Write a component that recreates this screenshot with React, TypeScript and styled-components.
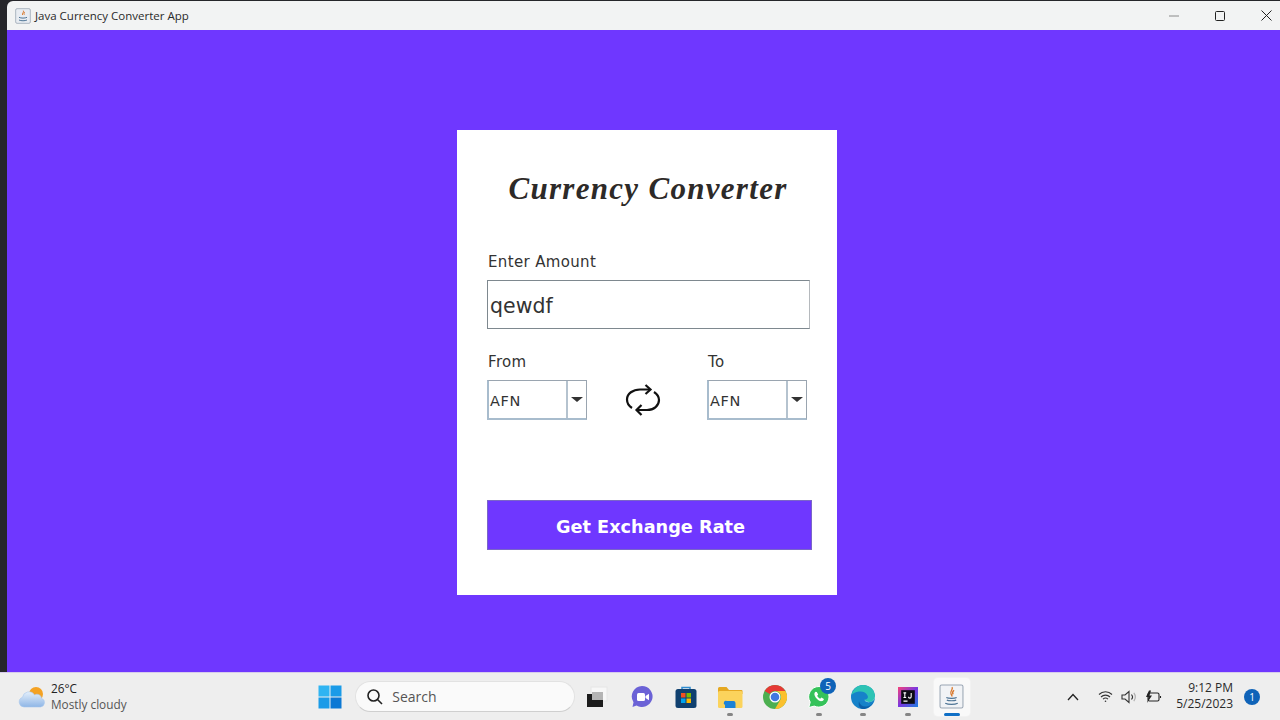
import styled, { createGlobalStyle } from "styled-components";

const GlobalStyle = createGlobalStyle`
  html, body {
    margin: 0;
    padding: 0;
    width: 1280px;
    height: 720px;
    overflow: hidden;
    background: #26262a;
  }
  * { box-sizing: border-box; }
`;

const Screen = styled.div`
  width: 1280px;
  height: 720px;
  display: flex;
  flex-direction: column;
`;

const Desktop = styled.div`
  flex: 1;
  min-height: 0;
  padding: 1px 0 0 7px;
  display: flex;
`;

const Window = styled.div`
  flex: 1;
  display: flex;
  flex-direction: column;
`;

const TitleBar = styled.div`
  height: 29px;
  background: #f2f3f3;
  border-top-left-radius: 6px;
  display: flex;
  align-items: center;
  padding-left: 8px;
  color: #2a2a2a;
  font: 11.5px "Open Sans", "Noto Sans", sans-serif;
  overflow: hidden;
`;

const AppIcon = styled.svg`
  width: 16px;
  height: 16px;
  margin-right: 4px;
`;

const WindowTitle = styled.span`
  flex: 1;
  white-space: nowrap;
`;

const WindowButton = styled.div`
  flex: none;
  width: 46px;
  height: 29px;
  display: flex;
  align-items: center;
  justify-content: center;
  svg { display: block; }
  &:last-child { margin-right: -9px; }
`;

const Content = styled.div`
  flex: 1;
  background: #6f37ff;
  padding: 100px 0 0 450px;
`;

const Card = styled.div`
  width: 380px;
  height: 465px;
  background: #fff;
  padding: 38px 25px 0 30px;
  color: #333;
  font-family: "DejaVu Sans", sans-serif;
`;

const Title = styled.h1`
  margin: 0 0 42px;
  height: 42px;
  text-align: center;
  font: italic 700 31px/42px "Liberation Serif", cursive;
  color: #2d2a28;
  letter-spacing: 1.3px;
  white-space: nowrap;
  padding-right: 3px;
`;

const FieldLabel = styled.div`
  height: 18px;
  line-height: 20px;
  font-size: 15px;
  letter-spacing: 0.35px;
  margin-left: 1px;
`;

const AmountInput = styled.div`
  width: 323px;
  height: 49px;
  margin-top: 10px;
  border: 1px solid #b5b9bd;
  border-top-color: #7e888f;
  border-bottom-color: #7e888f;
  border-left-color: #7e888f;
  padding-left: 2px;
  line-height: 50px;
  font-size: 20.5px;
  color: #333;
`;

const SelectRow = styled.div`
  display: flex;
  align-items: flex-start;
  margin-top: 23px;
`;

const SelectColumn = styled.div`
  display: flex;
  flex-direction: column;
  gap: 10px;
  width: 100px;
`;

const Combo = styled.div`
  width: 100px;
  height: 40px;
  display: flex;
  border: 1px solid #9aa5b0;
  border-left: 2px solid #a8bccd;
  border-bottom: 2px solid #a8bccd;
  background: #fff;
`;

const ComboValue = styled.div`
  width: 79px;
  border-right: 2px solid #b5c3cf;
  padding-left: 1px;
  line-height: 40px;
  font-size: 14.5px;
  letter-spacing: 0.6px;
`;

const ComboArrow = styled.div`
  flex: 1;
  display: flex;
  align-items: center;
  justify-content: center;
  &::before {
    content: "";
    border-left: 6px solid transparent;
    border-right: 6px solid transparent;
    border-top: 5px solid #333;
  }
`;

const SwapSlot = styled.div`
  width: 120px;
  height: 40px;
  margin-top: 28px;
  display: flex;
  align-items: center;
  justify-content: center;
  padding-right: 8px;
`;

const ConvertButton = styled.div`
  width: 325px;
  height: 50px;
  margin-top: 80px;
  background: #6f37ff;
  border: 1px solid #7a66c8;
  color: #fff;
  font-size: 17.7px;
  font-weight: 700;
  line-height: 53px;
  text-align: center;
  padding-left: 2px;
`;

const Taskbar = styled.div`
  height: 48px;
  background: #eeeeee;
  border-top: 1px solid #d6ccec;
  display: flex;
  align-items: center;
  font-family: "Open Sans", "Noto Sans", sans-serif;
  color: #222;
`;

const Weather = styled.div`
  width: 308px;
  padding-left: 18px;
  display: flex;
  align-items: center;
  gap: 6px;
`;

const WeatherText = styled.div`
  font-size: 11.8px;
  line-height: 16px;
  padding-bottom: 2px;
`;

const WeatherNote = styled.div`
  color: #555;
`;

const TaskSlot = styled.div<{ $active?: boolean; $running?: boolean }>`
  position: relative;
  width: ${(p) => (p.$active ? "36.3px" : "44.3px")};
  margin: ${(p) => (p.$active ? "0 4px" : "0")};
  height: 38px;
  display: flex;
  align-items: center;
  justify-content: center;
  border-radius: 4px;
  background: ${(p) => (p.$active ? "#f9f9f9" : "transparent")};
  box-shadow: ${(p) => (p.$active ? "0 0 0 1px #f2f2f2" : "none")};
  &::after {
    content: "";
    position: absolute;
    bottom: 0;
    left: 50%;
    height: 3px;
    border-radius: 2px;
    width: ${(p) => (p.$active ? "16px" : "6px")};
    margin-left: ${(p) => (p.$active ? "-8px" : "-3px")};
    background: ${(p) => (p.$active ? "#0f6fc6" : "#858585")};
    display: ${(p) => (p.$active || p.$running ? "block" : "none")};
  }
`;

const SearchBox = styled.div`
  width: 220px;
  height: 31px;
  margin: 0 0 0 3px;
  border-radius: 16px;
  background: #fafafa;
  border: 1px solid #e2e2e2;
  border-bottom-color: #cfcfcf;
  display: flex;
  align-items: center;
  padding-left: 10px;
  gap: 8px;
  font-size: 14px;
  color: #555;
`;

const Badge = styled.div`
  position: absolute;
  top: 0;
  right: 5px;
  width: 16px;
  height: 16px;
  border-radius: 50%;
  background: #0f63b8;
  color: #fff;
  font-size: 10px;
  line-height: 16px;
  text-align: center;
`;

const Tray = styled.div`
  flex: 1;
  display: flex;
  align-items: center;
  justify-content: flex-end;
  padding-right: 20px;
`;

const TrayIcon = styled.div<{ $width: number }>`
  width: ${(p) => p.$width}px;
  display: flex;
  justify-content: center;
`;

const Clock = styled.div`
  width: 65px;
  text-align: right;
  font-size: 12px;
  line-height: 16px;
  color: #2a2a2a;
  padding-bottom: 2px;
`;

const Notify = styled.div`
  width: 16px;
  height: 16px;
  margin-left: 11px;
  border-radius: 50%;
  background: #0f63b8;
  color: #fff;
  font-size: 10px;
  line-height: 16px;
  text-align: center;
`;

const JavaIcon = ({ size }: { size: number }) => (
  <svg width={size} height={size} viewBox="0 0 24 24">
    <rect x="1" y="1" width="22" height="22" rx="1.5" fill="#f1f3f6" stroke="#9aa6b4" />
    <path d="M12.5 3c1.5 2.5-2.500 4-1 6.500.5.9 1 1.500 1 2.500M14.500 6c-1.500 1-2 2-1 4" fill="none" stroke="#d9772a" strokeWidth="1.300" />
    <path d="M7 13c2 1 8 1 10 0M7.500 15.500c2 .8 7 .8 9 0M6 18.500c3 1.500 9 1.500 12 0" fill="none" stroke="#4f7596" strokeWidth="1.100" />
  </svg>
);

const StartIcon = () => (
  <svg width="24" height="24" viewBox="0 0 24 24">
    <rect x="0.500" y="0.500" width="11" height="11" fill="#2fb4f2" />
    <rect x="12.500" y="0.500" width="11" height="11" fill="#1a9be8" />
    <rect x="0.500" y="12.500" width="11" height="11" fill="#1a9be8" />
    <rect x="12.500" y="12.500" width="11" height="11" fill="#0b78d4" />
  </svg>
);

const TaskViewIcon = () => (
  <svg width="24" height="24" viewBox="0 0 24 24">
    <rect x="6" y="2" width="16" height="14" fill="#f7f7f7" stroke="#e6e6e6" />
    <rect x="2" y="9" width="16" height="13" fill="#1c1c1c" />
    <rect x="7" y="7" width="11" height="8" fill="#b4b4b4" />
  </svg>
);

const MeetIcon = () => (
  <svg width="24" height="24" viewBox="0 0 24 24">
    <path d="M12 1a10.500 10.500 0 1 1-5.500 19.400L2.500 22l1-4.800A10.500 10.500 0 0 1 12 1z" fill="#6b62d6" />
    <rect x="7" y="8" width="8" height="8" rx="1.500" fill="#fff" />
    <path d="M15.500 11l3.500-2.300v6.600L15.500 13z" fill="#fff" />
  </svg>
);

const StoreIcon = () => (
  <svg width="24" height="24" viewBox="0 0 24 24">
    <path d="M8 5V2.500h8V5" fill="none" stroke="#2d8bd0" strokeWidth="1.500" />
    <rect x="1.500" y="4" width="21" height="19" rx="2.500" fill="#10406f" />
    <rect x="7" y="8" width="4.500" height="4.500" fill="#f25022" />
    <rect x="12.500" y="8" width="4.500" height="4.500" fill="#7fba00" />
    <rect x="7" y="13.500" width="4.500" height="4.500" fill="#00a4ef" />
    <rect x="12.500" y="13.500" width="4.500" height="4.500" fill="#ffb900" />
  </svg>
);

const FolderIcon = () => (
  <svg width="26" height="24" viewBox="0 0 26 24">
    <path d="M1 3.500A1.500 1.500 0 0 1 2.500 2h7l2.500 3h12.500A1 1 0 0 1 25.500 6v3H1z" fill="#e5a821" />
    <rect x="1" y="6" width="24.500" height="17" rx="1.500" fill="#fbd35c" />
    <path d="M8 20a2 2 0 0 1 2-4h6.500a2 2 0 0 1 2 2v5H8z" fill="#1c82d6" />
  </svg>
);

const ChromeIcon = () => (
  <svg width="24" height="24" viewBox="0 0 24 24">
    <circle cx="12" cy="12" r="12" fill="#4caf50" />
    <path d="M12 0a12 12 0 0 1 10.400 6H12a6 6 0 0 0-5.200 3L1.600 6A12 12 0 0 1 12 0z" fill="#e53935" />
    <path d="M22.400 6A12 12 0 0 1 12 24l5.200-9a6 6 0 0 0 0-6 6 6 0 0 0-5.200-3z" fill="#fbc02d" />
    <circle cx="12" cy="12" r="5.500" fill="#fff" />
    <circle cx="12" cy="12" r="4.300" fill="#3f78e0" />
  </svg>
);

const WhatsappIcon = () => (
  <svg width="24" height="24" viewBox="0 0 24 24">
    <path d="M12 1.500a10.300 10.300 0 0 0-8.800 15.600L1.800 22.500l5.500-1.400A10.300 10.300 0 1 0 12 1.500z" fill="#35c25a" stroke="#fff" />
    <path d="M8.500 6.800c-1.500 1-1.600 3 .2 5.600 2 2.800 4.600 4.300 6.500 3.700 1-.3 1.700-1.200 1.700-2l-2.500-1.500-1.200 1.200c-1.200-.5-2.500-1.800-3-3l1-1.200L9.800 7z" fill="#fff" />
  </svg>
);

const EdgeIcon = () => (
  <svg width="24" height="24" viewBox="0 0 24 24">
    <circle cx="12" cy="12" r="12" fill="#1682c9" />
    <path d="M0.500 10C2 3.500 7 0 12 0c7 0 12 5 12 11.500 0 3.500-3 5.500-6 5.500-2.500 0-4-1-4.500-2.500 3 0 4-2 3-4C15 7.500 12 6 8 6.500 4.500 7 2 8 0.500 10z" fill="#2dc3b4" />
    <path d="M22 17.500C20 21.500 16 24 12 24 8.500 24 7 20 8 16.500c.8 3.500 4 5.500 8 5 2.500-.3 4.500-2 6-4z" fill="#0b5fa8" />
    <path d="M13.500 14.500c.5 2.500 4 3.500 7 2 1.500-.8 3-2.500 3.500-5 0 3.500-3 5.500-6 5.500-2.200 0-4-1-4.500-2.500z" fill="#fff" />
  </svg>
);

const IdeaIcon = () => (
  <svg width="20" height="20" viewBox="0 0 22 22">
    <defs>
      <linearGradient id="ideaEdge" x1="0" y1="0" x2="1" y2="1">
        <stop offset="0" stopColor="#f5417a" />
        <stop offset="0.500" stopColor="#7a37e0" />
        <stop offset="1" stopColor="#1d7fe0" />
      </linearGradient>
    </defs>
    <rect width="22" height="22" fill="url(#ideaEdge)" />
    <rect x="3.500" y="3.500" width="15" height="15" fill="#0c0c14" />
    <path d="M6 6.500h3M7.500 6.500v5M6 11.500h3M14.500 6.500v4.200a1.500 1.500 0 0 1-3 0M6 15.500h4.500" fill="none" stroke="#fff" strokeWidth="1.200" />
  </svg>
);

const CloudIcon = () => (
  <svg width="27" height="24" viewBox="0 0 27 24">
    <defs>
      <linearGradient id="cloudFill" x1="0" y1="0" x2="0" y2="1">
        <stop offset="0" stopColor="#e4effb" />
        <stop offset="1" stopColor="#8fb6e6" />
      </linearGradient>
    </defs>
    <circle cx="18" cy="9" r="7" fill="#f4a224" />
    <path d="M6 22a5 5 0 0 1-1.500-9.700 6.500 6.500 0 0 1 12-2.300 4.500 4.500 0 0 1 7 3.300A4.500 4.500 0 0 1 22.500 22z" fill="url(#cloudFill)" stroke="#a9c7ec" strokeWidth="0.600" />
  </svg>
);

const App = () => {
  return (
    <Screen>
      <GlobalStyle />
      <Desktop>
        <Window>
          <TitleBar>
            <AppIcon viewBox="0 0 24 24">
              <rect x="1" y="1" width="22" height="22" rx="2" fill="#e8ecf2" stroke="#8d99a8" />
              <path d="M12.500 4c1.500 2.500-2.500 4-1 6.500M15 6c-1.500 1-2 2-1 4" fill="none" stroke="#d9772a" strokeWidth="1.500" />
              <path d="M6 14c3 1.500 9 1.500 12 0M6 18c3 1.500 9 1.500 12 0" fill="none" stroke="#4f7596" strokeWidth="1.500" />
            </AppIcon>
            <WindowTitle>Java Currency Converter App</WindowTitle>
            <WindowButton>
              <svg width="10" height="10" viewBox="0 0 10 10">
                <path d="M0 5h10" stroke="#8a8a8a" strokeWidth="1" />
              </svg>
            </WindowButton>
            <WindowButton>
              <svg width="10" height="10" viewBox="0 0 10 10">
                <rect x="0.500" y="0.500" width="9" height="9" rx="1" fill="none" stroke="#222" strokeWidth="1" />
              </svg>
            </WindowButton>
            <WindowButton>
              <svg width="11" height="11" viewBox="0 0 11 11">
                <path d="M0.500 0.500l10 10M10.500 0.500l-10 10" stroke="#222" strokeWidth="1" />
              </svg>
            </WindowButton>
          </TitleBar>
          <Content>
            <Card>
              <Title>Currency Converter</Title>
              <FieldLabel>Enter Amount</FieldLabel>
              <AmountInput>qewdf</AmountInput>
              <SelectRow>
                <SelectColumn>
                  <FieldLabel>From</FieldLabel>
                  <Combo>
                    <ComboValue>AFN</ComboValue>
                    <ComboArrow />
                  </Combo>
                </SelectColumn>
                <SwapSlot>
                  <svg width="36" height="32" viewBox="0 0 36 32" fill="none" stroke="#111" strokeWidth="2.200">
                    <path d="M25 5.500H15C8 5.500 2 9.500 2 15.500c0 3.500 2 6.500 5 8.500" />
                    <path d="M20.500 1l5 4.500-5 4.500" />
                    <path d="M12 26h10c7 0 12-4.500 12-10 0-3.500-2-6-5-8" />
                    <path d="M16.500 21l-5 5 5 5" />
                  </svg>
                </SwapSlot>
                <SelectColumn>
                  <FieldLabel>To</FieldLabel>
                  <Combo>
                    <ComboValue>AFN</ComboValue>
                    <ComboArrow />
                  </Combo>
                </SelectColumn>
              </SelectRow>
              <ConvertButton>Get Exchange Rate</ConvertButton>
            </Card>
          </Content>
        </Window>
      </Desktop>
      <Taskbar>
        <Weather>
          <CloudIcon />
          <WeatherText>
            <div>26°C</div>
            <WeatherNote>Mostly cloudy</WeatherNote>
          </WeatherText>
        </Weather>
        <TaskSlot>
          <StartIcon />
        </TaskSlot>
        <SearchBox>
          <svg width="18" height="18" viewBox="0 0 18 18" fill="none" stroke="#222" strokeWidth="1.600">
            <circle cx="7.500" cy="7.500" r="5.500" />
            <path d="M11.500 11.500L16 16" />
          </svg>
          Search
        </SearchBox>
        <TaskSlot>
          <TaskViewIcon />
        </TaskSlot>
        <TaskSlot>
          <MeetIcon />
        </TaskSlot>
        <TaskSlot>
          <StoreIcon />
        </TaskSlot>
        <TaskSlot $running>
          <FolderIcon />
        </TaskSlot>
        <TaskSlot>
          <ChromeIcon />
        </TaskSlot>
        <TaskSlot $running>
          <WhatsappIcon />
          <Badge>5</Badge>
        </TaskSlot>
        <TaskSlot $running>
          <EdgeIcon />
        </TaskSlot>
        <TaskSlot $running>
          <IdeaIcon />
        </TaskSlot>
        <TaskSlot $active>
          <JavaIcon size={25} />
        </TaskSlot>
        <Tray>
          <TrayIcon $width={34}>
            <svg width="12" height="8" viewBox="0 0 12 8" fill="none" stroke="#222" strokeWidth="1.300">
              <path d="M1 7l5-5.500L11 7" />
            </svg>
          </TrayIcon>
          <TrayIcon $width={30}>
            <svg width="15" height="13" viewBox="0 0 15 13" fill="none" stroke="#333" strokeWidth="1.100">
              <path d="M1 4.500c3.600-3.600 9.400-3.600 13 0M3 7c2.500-2.500 6.500-2.500 9 0M5 9.200c1.400-1.300 3.600-1.300 5 0" />
              <circle cx="7.500" cy="11.300" r="0.800" fill="#333" stroke="none" />
            </svg>
          </TrayIcon>
          <TrayIcon $width={18}>
            <svg width="16" height="14" viewBox="0 0 16 14" fill="none" stroke="#333" strokeWidth="1.100">
              <path d="M1 5h3l4-3.500v11L4 9H1z" />
              <path d="M10.500 4.500c1.200 1.400 1.200 3.600 0 5" />
              <path d="M12.800 2.800c2 2.300 2 6.100 0 8.400" stroke="#aaa" />
            </svg>
          </TrayIcon>
          <TrayIcon $width={30}>
            <svg width="18" height="14" viewBox="0 0 18 14" fill="none" stroke="#222" strokeWidth="1.100">
              <rect x="4" y="3" width="11" height="8" rx="1.500" />
              <path d="M16.500 6v2" />
              <path d="M5 0.500L2 7h2.500L3 13l5-7.500H5.500L7 0.500z" fill="#222" stroke="none" />
            </svg>
          </TrayIcon>
          <Clock>
            <div>9:12 PM</div>
            <div>5/25/2023</div>
          </Clock>
          <Notify>1</Notify>
        </Tray>
      </Taskbar>
    </Screen>
  );
};

export default App;
